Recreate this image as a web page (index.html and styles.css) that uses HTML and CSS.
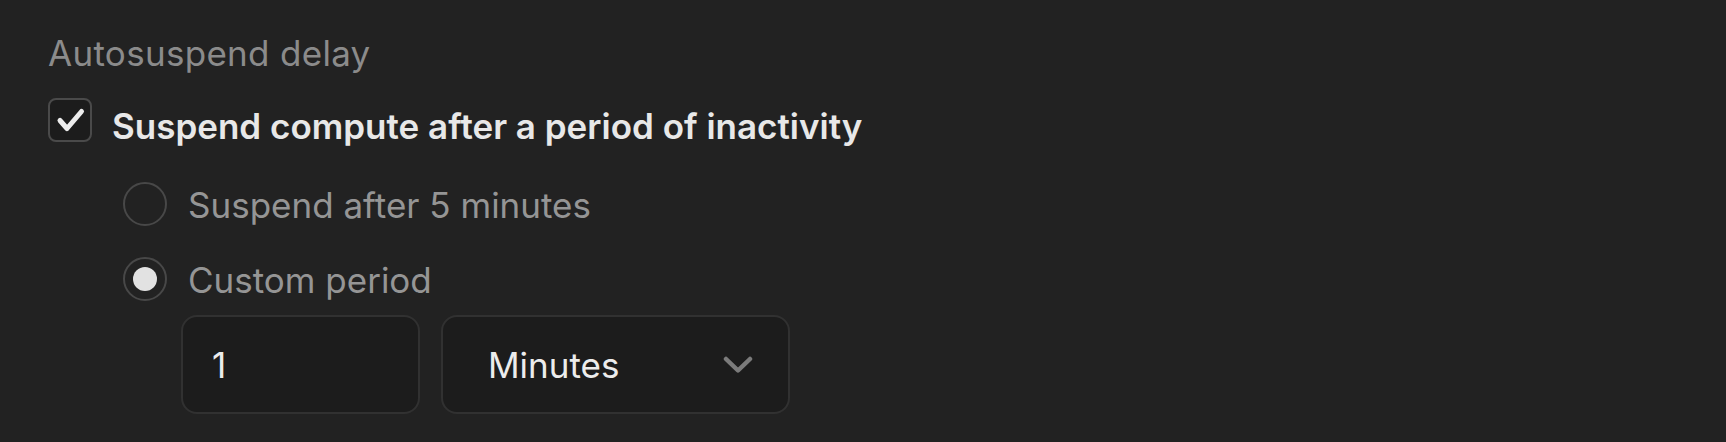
FILE: index.html
```html
<!DOCTYPE html>
<html lang="en">
<head>
<meta charset="utf-8">
<title>Autosuspend delay</title>
<link rel="stylesheet" href="styles.css">
</head>
<body>
<div class="panel">
  <div class="section-label">Autosuspend delay</div>
  <label class="check-row">
    <span class="checkbox">
      <svg viewBox="0 0 44 44" width="44" height="44" aria-hidden="true">
        <path d="M12 22.5 L19 30.5 L33.5 13.5" fill="none" stroke="#ececec" stroke-width="5" stroke-linecap="round" stroke-linejoin="round"/>
      </svg>
    </span>
    <span class="check-text">Suspend compute after a period of inactivity</span>
  </label>
  <div class="options">
    <label class="radio-row">
      <span class="radio"></span>
      <span class="radio-text">Suspend after 5 minutes</span>
    </label>
    <label class="radio-row">
      <span class="radio radio-on"><span class="dot"></span></span>
      <span class="radio-text">Custom period</span>
    </label>
    <div class="custom-fields">
      <div class="field field-number">1</div>
      <div class="field field-select">
        <span>Minutes</span>
        <svg class="chevron" viewBox="0 0 30 18" width="30" height="18" aria-hidden="true">
          <path d="M3 3 L15 14.5 L27 3" fill="none" stroke="#7b7b7b" stroke-width="4.5" stroke-linecap="round" stroke-linejoin="round"/>
        </svg>
      </div>
    </div>
  </div>
</div>
</body>
</html>
```

FILE: styles.css
```css
html, body {
  margin: 0;
  padding: 0;
  background: #222222;
}

body {
  font-family: Inter, "Noto Sans", "Liberation Sans", sans-serif;
  color: #e6e6e6;
}

.panel {
  padding: 31px 48px 0 48px;
  display: flex;
  flex-direction: column;
}

.section-label {
  font-size: 35px;
  line-height: 44px;
  color: #8b8b8b;
  font-weight: 400;
  letter-spacing: 0.3px;
}

.check-row {
  margin-top: 23px;
  display: flex;
  align-items: flex-start;
  gap: 20px;
}

.checkbox {
  width: 44px;
  height: 44px;
  box-sizing: border-box;
  border: 2px solid #4a4a4a;
  border-radius: 8px;
  background: #1c1c1c;
  display: flex;
  align-items: center;
  justify-content: center;
  flex: none;
}

.checkbox svg {
  display: block;
  margin: -2px;
}

.check-text {
  font-size: 35px;
  line-height: 52px;
  padding-top: 2px;
  font-weight: 600;
  color: #e8e8e8;
}

.options {
  margin-top: 30px;
  padding-left: 75px;
  display: flex;
  flex-direction: column;
  gap: 29px;
}

.radio-row {
  display: flex;
  align-items: flex-start;
  gap: 21px;
  height: 46px;
}

.radio {
  width: 44px;
  height: 44px;
  box-sizing: border-box;
  border: 2px solid #484848;
  border-radius: 50%;
  flex: none;
  display: flex;
  align-items: center;
  justify-content: center;
}

.dot {
  width: 24px;
  height: 24px;
  border-radius: 50%;
  background: #e2e2e2;
}

.radio-text {
  font-size: 35px;
  line-height: 46px;
  color: #959595;
}

.custom-fields {
  margin-top: -17px;
  padding-left: 58px;
  display: flex;
  gap: 21px;
}

.field {
  box-sizing: border-box;
  height: 99px;
  border: 2px solid #313131;
  border-radius: 16px;
  background: #1c1c1c;
  font-size: 35px;
  color: #ececec;
  display: flex;
  align-items: center;
}

.field-number {
  width: 239px;
  padding-left: 29px;
}

.field-select {
  width: 349px;
  padding-left: 45px;
  padding-right: 35px;
  justify-content: space-between;
}

.chevron {
  display: block;
}
```
